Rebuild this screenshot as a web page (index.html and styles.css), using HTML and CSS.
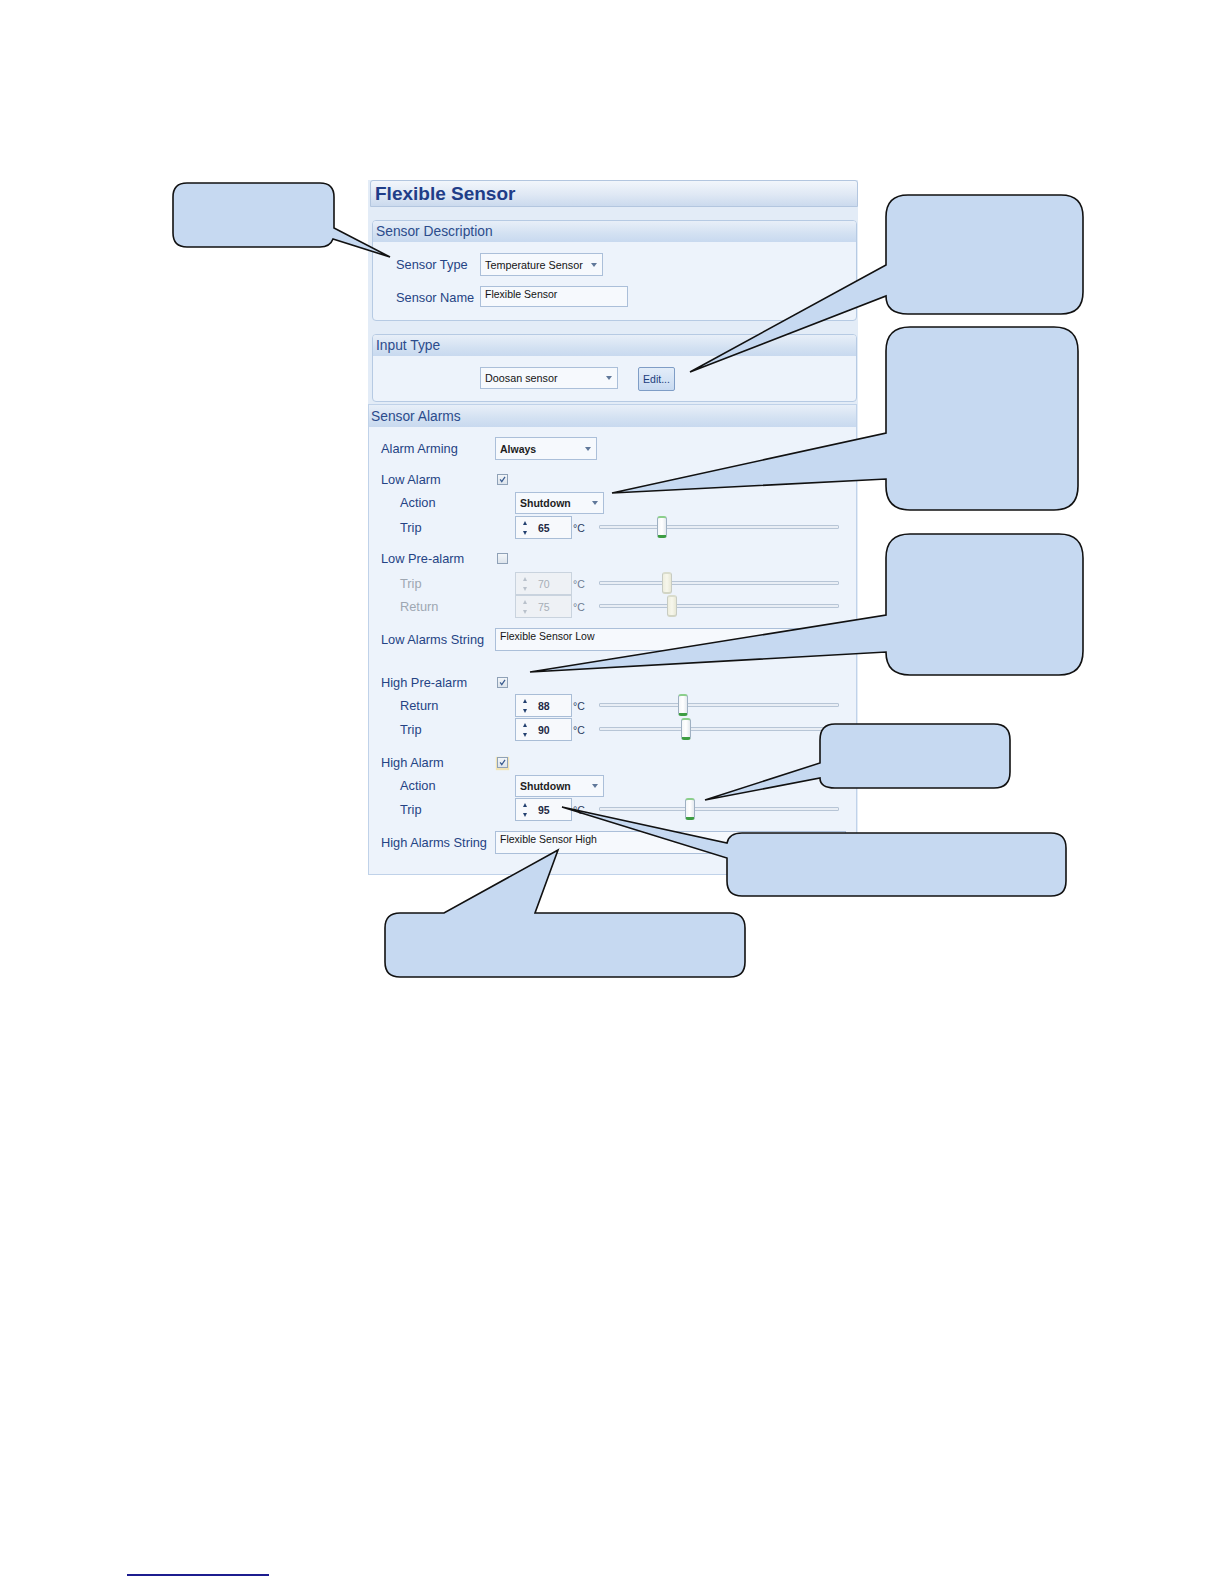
FILE: index.html
```html
<!DOCTYPE html>
<html lang="en">
<head>
<meta charset="utf-8">
<title>Flexible Sensor</title>
<link rel="stylesheet" href="styles.css">
</head>
<body>
<div class="page">
  <div class="panel">
    <div class="titlebar">Flexible Sensor</div>

    <section class="group">
      <div class="group-head">Sensor Description</div>
      <div class="group-body desc-body">
        <div class="frow h23"><span class="flabel">Sensor Type</span><div class="combo w-type">Temperature Sensor<i class="arrow"></i></div></div>
        <div class="frow h21"><span class="flabel">Sensor Name</span><div class="textbox w-name">Flexible Sensor</div></div>
      </div>
    </section>

    <section class="group">
      <div class="group-head">Input Type</div>
      <div class="group-body input-body">
        <div class="frow h24"><span class="flabel"></span><div class="combo w-doosan">Doosan sensor<i class="arrow"></i></div><div class="btn">Edit...</div></div>
      </div>
    </section>

    <section class="alarms">
      <div class="alarms-head">Sensor Alarms</div>
      <div class="alarms-body">
        <div class="row"><span class="lbl">Alarm Arming</span><div class="combo bold w-arm">Always<i class="arrow"></i></div></div>

        <div class="row mt8"><span class="lbl">Low Alarm</span><span class="check"><svg viewBox="0 0 11 11"><path d="M2.6 5.4 L4.6 8.2 L8.6 2.4"/></svg></span></div>
        <div class="row"><span class="lbl sub">Action</span><div class="combo bold w-act">Shutdown<i class="arrow"></i></div></div>
        <div class="row mt2"><span class="lbl sub">Trip</span><div class="spin"><span class="spin-btns"><i class="up"></i><i class="dn"></i></span><span class="spin-val">65</span></div><span class="unit">°C</span><div class="slider"><span class="track"></span><span class="thumb" style="left:58px"></span></div></div>

        <div class="row mt8"><span class="lbl">Low Pre-alarm</span><span class="check"></span></div>
        <div class="row mt2 off"><span class="lbl sub">Trip</span><div class="spin"><span class="spin-btns"><i class="up"></i><i class="dn"></i></span><span class="spin-val">70</span></div><span class="unit">°C</span><div class="slider"><span class="track"></span><span class="thumb" style="left:63px"></span></div></div>
        <div class="row off"><span class="lbl sub">Return</span><div class="spin"><span class="spin-btns"><i class="up"></i><i class="dn"></i></span><span class="spin-val">75</span></div><span class="unit">°C</span><div class="slider"><span class="track"></span><span class="thumb" style="left:68px"></span></div></div>

        <div class="row mt10"><span class="lbl">Low Alarms String</span><div class="textbox w-str">Flexible Sensor Low</div></div>

        <div class="row mt20"><span class="lbl">High Pre-alarm</span><span class="check"><svg viewBox="0 0 11 11"><path d="M2.6 5.4 L4.6 8.2 L8.6 2.4"/></svg></span></div>
        <div class="row"><span class="lbl sub">Return</span><div class="spin"><span class="spin-btns"><i class="up"></i><i class="dn"></i></span><span class="spin-val">88</span></div><span class="unit">°C</span><div class="slider"><span class="track"></span><span class="thumb" style="left:79px"></span></div></div>
        <div class="row mt1"><span class="lbl sub">Trip</span><div class="spin"><span class="spin-btns"><i class="up"></i><i class="dn"></i></span><span class="spin-val">90</span></div><span class="unit">°C</span><div class="slider"><span class="track"></span><span class="thumb" style="left:82px"></span></div></div>

        <div class="row mt10"><span class="lbl">High Alarm</span><span class="check focus"><svg viewBox="0 0 11 11"><path d="M2.6 5.4 L4.6 8.2 L8.6 2.4"/></svg></span></div>
        <div class="row"><span class="lbl sub">Action</span><div class="combo bold w-act">Shutdown<i class="arrow"></i></div></div>
        <div class="row mt1"><span class="lbl sub">Trip</span><div class="spin"><span class="spin-btns"><i class="up"></i><i class="dn"></i></span><span class="spin-val">95</span></div><span class="unit">°C</span><div class="slider"><span class="track"></span><span class="thumb" style="left:86px"></span></div></div>

        <div class="row mt10"><span class="lbl">High Alarms String</span><div class="textbox w-str">Flexible Sensor High</div></div>
      </div>
    </section>
  </div>

  <div class="rule"></div>

  <svg class="callouts" viewBox="0 0 1224 1584" width="1224" height="1584">
    <path d="M187 183 H320 Q334 183 334 197 V228 L390 257 L333 239 Q330 247 320 247 H187 Q173 247 173 233 V197 Q173 183 187 183 Z"/>
    <path d="M908 195 H1061 Q1083 195 1083 217 V292 Q1083 314 1061 314 H908 Q886 314 886 296 L690 372 L886 265 V217 Q886 195 908 195 Z"/>
    <path d="M910 327 H1054 Q1078 327 1078 351 V486 Q1078 510 1054 510 H910 Q886 510 886 486 V479 L612 493 L886 433 V351 Q886 327 910 327 Z"/>
    <path d="M910 534 H1059 Q1083 534 1083 558 V651 Q1083 675 1059 675 H910 Q886 675 886 652 L530 672 L886 615 V558 Q886 534 910 534 Z"/>
    <path d="M835 724 H994 Q1010 724 1010 740 V772 Q1010 788 994 788 H835 Q820 788 820 778 L705 800 L820 763 V740 Q820 724 835 724 Z"/>
    <path d="M742 833 H1051 Q1066 833 1066 848 V881 Q1066 896 1051 896 H742 Q727 896 727 881 V858 L562 807 L727 843 Q729 833 742 833 Z"/>
    <path d="M400 913 H444 L558 850 L535 913 H730 Q745 913 745 928 V962 Q745 977 730 977 H400 Q385 977 385 962 V928 Q385 913 400 913 Z"/>
  </svg>
</div>
</body>
</html>
```

FILE: styles.css
```css
* { box-sizing: border-box; }

body {
  margin: 0;
  background: #ffffff;
  font-family: "Liberation Sans", Arial, sans-serif;
}

.page {
  position: relative;
  width: 1224px;
  height: 1584px;
  padding-top: 180px;
  display: flex;
  flex-direction: column;
}

/* ---------- panel ---------- */
.panel {
  margin-left: 368px;
  width: 490px;
  background: #e3ecf7;
}

.titlebar {
  margin-left: 2px;
  height: 27px;
  border: 1px solid #b3c6df;
  border-radius: 3px 3px 0 0;
  background: linear-gradient(#f2f6fb, #dfe8f4 55%, #cbdaee);
  display: flex;
  align-items: center;
  padding-left: 4px;
  font-weight: bold;
  font-size: 19px;
  color: #1f3d88;
}

.group {
  margin: 13px 1px 0 4px;
  border: 1px solid #b6cae3;
  border-radius: 4px;
  background: #edf3fb;
  overflow: hidden;
}

.group-head,
.alarms-head {
  display: flex;
  align-items: center;
  padding-left: 3px;
  font-size: 13.8px;
  color: #2c4c8c;
  background: linear-gradient(#e8eff8, #d3e1f2 60%, #c8d9ef);
}

.group-head { height: 21px; }

.group-body {
  display: flex;
  flex-direction: column;
}

.desc-body {
  padding: 11px 0 13px;
  gap: 10px;
}

.input-body {
  padding: 11px 0 10px;
}

.frow {
  display: flex;
  align-items: flex-start;
}

.h21 { height: 21px; }
.h23 { height: 23px; }
.h24 { height: 24px; }

.flabel {
  width: 107px;
  padding-left: 23px;
  font-size: 12.8px;
  line-height: 23px;
  color: #254384;
  white-space: nowrap;
}

/* ---------- controls ---------- */
.combo {
  display: flex;
  align-items: center;
  height: 23px;
  padding: 0 5px 0 4px;
  border: 1px solid #abbfd9;
  background: #f6f9fd;
  font-size: 10.8px;
  color: #141414;
  white-space: nowrap;
}

.combo.bold {
  font-weight: bold;
  font-size: 10.5px;
  color: #1d1d1d;
}

.arrow {
  margin-left: auto;
  width: 0;
  height: 0;
  border-left: 3.5px solid transparent;
  border-right: 3.5px solid transparent;
  border-top: 4px solid #60789a;
}

.w-type { width: 123px; }
.w-doosan { width: 138px; height: 22px; }
.w-arm { width: 102px; }
.w-act { width: 89px; height: 22px; }

.textbox {
  border: 1px solid #abbfd9;
  background: #f6f9fd;
  padding: 0 4px;
  font-size: 10.5px;
  line-height: 14px;
  color: #141414;
  white-space: nowrap;
}

.w-name { width: 148px; height: 21px; }
.w-str { width: 351px; height: 23px; }

.btn {
  margin-left: 20px;
  width: 37px;
  height: 24px;
  border: 1px solid #7f9dc6;
  border-radius: 2px;
  background: linear-gradient(#e3edf9, #c8daf1);
  display: flex;
  align-items: center;
  justify-content: center;
  font-size: 10.5px;
  color: #1b3d7c;
}

/* ---------- alarms ---------- */
.alarms {
  margin: 2px 1px 0 0;
  border: 1px solid #c0d2e9;
  background: #edf3fb;
}

.alarms-head {
  height: 22px;
  padding-left: 2px;
}

.alarms-body {
  display: flex;
  flex-direction: column;
  padding: 10px 0 20px 12px;
}

.row {
  display: flex;
  align-items: center;
  height: 23px;
}

.mt1 { margin-top: 1px; }
.mt2 { margin-top: 2px; }
.mt8 { margin-top: 8px; }
.mt10 { margin-top: 10px; }
.mt20 { margin-top: 20px; }

.lbl {
  width: 114px;
  font-size: 12.8px;
  color: #254384;
  white-space: nowrap;
}

.lbl.sub {
  width: 134px;
  padding-left: 19px;
}

.off .lbl { color: #9ea7b2; }

.check {
  margin-left: 2px;
  width: 11px;
  height: 11px;
  border: 1px solid #8fa1b7;
  background: linear-gradient(#f3f6f9, #dde4ec);
  display: flex;
}

.check svg {
  width: 9px;
  height: 9px;
}

.check path {
  fill: none;
  stroke: #3b5c90;
  stroke-width: 1.5;
}

.check.focus {
  box-shadow: 0 1px 1px 1px #f1e3b4;
}

.spin {
  display: flex;
  align-items: center;
  width: 57px;
  height: 23px;
  border: 1px solid #a9bdd6;
  background: #f7f9fc;
}

.spin-btns {
  width: 18px;
  height: 14px;
  display: flex;
  flex-direction: column;
  justify-content: space-between;
  align-items: center;
}

.up,
.dn {
  width: 0;
  height: 0;
  border-left: 2.5px solid transparent;
  border-right: 2.5px solid transparent;
}

.up { border-bottom: 4px solid #23406f; }
.dn { border-top: 4px solid #23406f; }

.spin-val {
  margin-left: 4px;
  font-size: 10.5px;
  font-weight: bold;
  color: #1e2a45;
}

.off .spin {
  border-color: #c9d3de;
  background: #eef1f5;
}

.off .up { border-bottom-color: #b9c1cb; }
.off .dn { border-top-color: #b9c1cb; }
.off .spin-val { font-weight: normal; color: #a7aeb7; }

.unit {
  width: 27px;
  padding-left: 1px;
  font-size: 10.5px;
  color: #2a3d63;
}

.off .unit { color: #6f7d92; }

.slider {
  position: relative;
  width: 240px;
  height: 23px;
}

.track {
  position: absolute;
  left: 0;
  right: 0;
  top: 9px;
  height: 4px;
  border: 1px solid #b7c5d6;
  border-radius: 1px;
  background: #e9eef5;
}

.thumb {
  position: absolute;
  top: 0;
  width: 10px;
  height: 22px;
  border: 1px solid #9fb0c2;
  border-top: 2px solid #8ccf8c;
  border-bottom: 3px solid #3d9d42;
  border-radius: 3px;
  background: linear-gradient(90deg, #f4f6f8, #ffffff 50%, #e4e9ee);
}

.off .thumb {
  border-color: #c7cbc2;
  border-top: 2px solid #d9dccd;
  border-bottom: 2px solid #d2d5c4;
  background: linear-gradient(90deg, #eeeede, #f7f7ec 50%, #e8e8d6);
}

/* ---------- page footer rule ---------- */
.rule {
  margin-top: auto;
  margin-bottom: 8px;
  margin-left: 127px;
  width: 142px;
  height: 2px;
  background: #1c1c8f;
}

/* ---------- callouts ---------- */
.callouts {
  position: absolute;
  left: 0;
  top: 0;
  pointer-events: none;
}

.callouts path {
  fill: #c6d9f1;
  stroke: #111111;
  stroke-width: 1.6;
  stroke-linejoin: miter;
}
```
